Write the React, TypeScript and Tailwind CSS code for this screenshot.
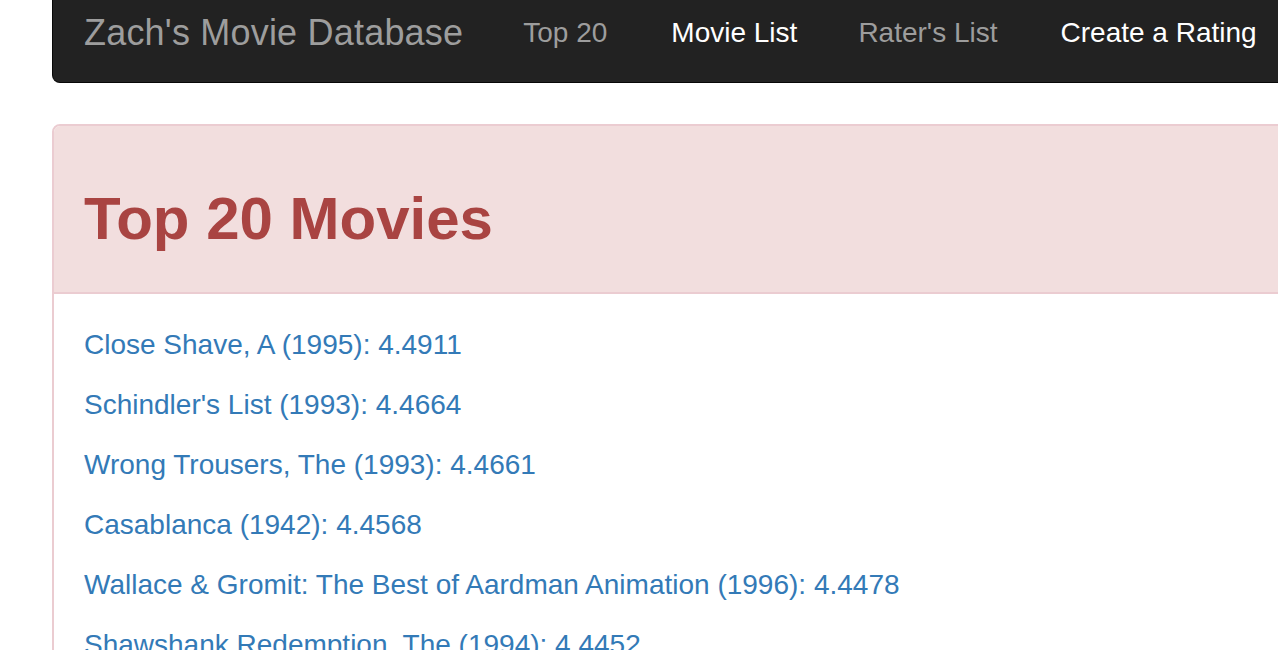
import React from 'react';

const movies = [
    { title: 'Close Shave, A (1995)', score: '4.4911' },
    { title: "Schindler's List (1993)", score: '4.4664' },
    { title: 'Wrong Trousers, The (1993)', score: '4.4661' },
    { title: 'Casablanca (1942)', score: '4.4568' },
    { title: 'Wallace & Gromit: The Best of Aardman Animation (1996)', score: '4.4478' },
    { title: 'Shawshank Redemption, The (1994)', score: '4.4452' },
    { title: 'Rear Window (1954)', score: '4.3876' },
    { title: 'Usual Suspects, The (1995)', score: '4.3858' },
];

const navLinks = [
    { label: 'Top 20', active: false, className: 'ml-[60px]' },
    { label: 'Movie List', active: true, className: 'ml-[64px]' },
    { label: "Rater's List", active: false, className: 'ml-[61px]' },
    { label: 'Create a Rating', active: true, className: 'ml-[63px]' },
];

const App: React.FC = () => {
    return (
        <div
            className="w-[1278px] h-[650px] overflow-hidden bg-white"
            style={{ fontFamily: '"Liberation Sans", Arial, sans-serif' }}
        >
            <div className="ml-[52px] w-[1300px]">
                {/* Navbar */}
                <nav className="h-[83px] bg-[#222222] border border-t-0 border-[#080808] rounded-b-[8px] flex items-start pt-[13px] pl-[31px]">
                    <a className="text-[36px] leading-[40px] text-[#9d9d9d] tracking-[0.2px]">
                        Zach's Movie Database
                    </a>
                    <ul className="flex">
                        {navLinks.map((link) => (
                            <li key={link.label} className={link.className}>
                                <a className={`text-[28px] leading-[40px] ${link.active ? 'text-white' : 'text-[#9d9d9d]'}`}>
                                    {link.label}
                                </a>
                            </li>
                        ))}
                    </ul>
                </nav>

                {/* Panel */}
                <div className="mt-[41px] border-2 border-[#ebccd1] rounded-t-[8px]">
                    <div className="bg-[#f2dede] border-b-2 border-[#ebccd1] rounded-t-[6px] px-[30px] pt-[60px] pb-[40px]">
                        <h2 className="text-[60px] leading-[66px] font-bold text-[#a94442]">
                            Top 20 Movies
                        </h2>
                    </div>
                    <div className="px-[30px] pt-[31px]">
                        {movies.map((m) => (
                            <p key={m.title} className="text-[28px] leading-[40px] mb-[20px] text-[#337ab7]">
                                <a>{m.title}: {m.score}</a>
                            </p>
                        ))}
                    </div>
                </div>
            </div>
        </div>
    );
};

export default App;
